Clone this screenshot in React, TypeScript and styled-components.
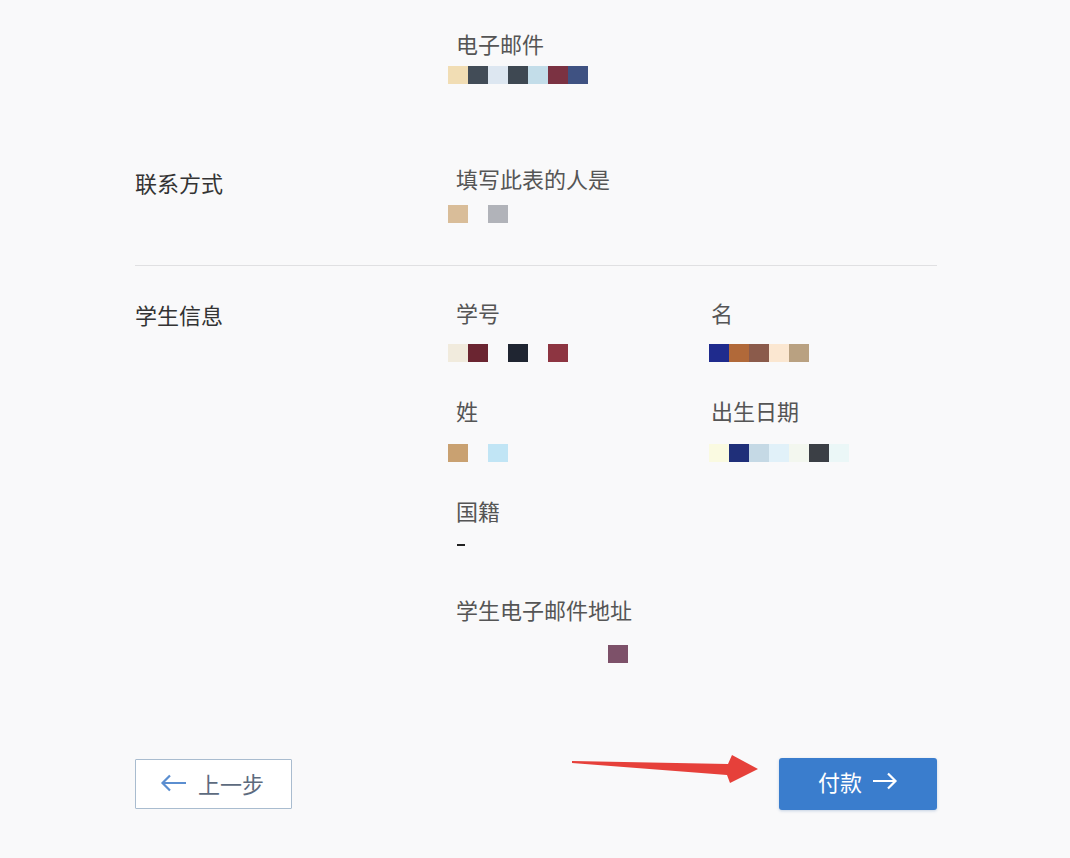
import React from "react";
import styled, { createGlobalStyle } from "styled-components";

const GlobalStyle = createGlobalStyle`
  html, body { margin: 0; padding: 0; background: #f9f9fa; }
  body { font-family: "Noto Sans CJK SC", "Noto Sans", "Liberation Sans", sans-serif; }
  * { box-sizing: border-box; }
`;

const Page = styled.div`
  width: 1070px;
  min-height: 858px;
  padding: 33px 133px 0 135px;
  background: #f9f9fa;
`;

const Section = styled.section<{ $top?: number }>`
  display: grid;
  grid-template-columns: 321px 1fr;
  margin-top: ${(p) => p.$top ?? 0}px;
`;

const SectionLabel = styled.div<{ $top?: number }>`
  font-size: 22px;
  line-height: 20px;
  color: #333;
  padding-top: ${(p) => p.$top ?? 0}px;
`;

const Fields = styled.div`
  display: grid;
  grid-template-columns: 255px 1fr;
  row-gap: 38px;
`;

const Field = styled.div<{ $full?: boolean }>`
  display: flex;
  flex-direction: column;
  grid-column: ${(p) => (p.$full ? "1 / -1" : "auto")};
`;

const FieldLabel = styled.div`
  font-size: 22px;
  line-height: 20px;
  color: #555;
`;

const Value = styled.div<{ $gap: number; $shift: number }>`
  display: flex;
  margin-top: ${(p) => p.$gap}px;
  margin-left: ${(p) => p.$shift}px;
  height: 18px;
`;

const Cell = styled.span<{ $c: string }>`
  width: 20px;
  height: 18px;
  background: ${(p) => p.$c};
`;

const Dash = styled.div`
  margin: 24px 0 15px 1px;
  width: 8px;
  height: 2px;
  background: #222;
`;

const Divider = styled.hr`
  margin: 42px 0 0 0;
  border: 0;
  border-top: 1px solid #e0e0e2;
  width: 802px;
`;

const Footer = styled.div`
  position: relative;
  display: flex;
  justify-content: space-between;
  align-items: center;
  width: 802px;
  margin-top: 95px;
  height: 52px;
`;

const BackButton = styled.button`
  display: flex;
  align-items: center;
  gap: 11px;
  width: 157px;
  height: 50px;
  padding: 0 0 2px 24px;
  background: #fff;
  border: 1.5px solid #a9bccf;
  border-radius: 1px;
  font-family: inherit;
  font-size: 22px;
  color: #5d6b7e;
  cursor: pointer;
`;

const PayButton = styled.button`
  display: flex;
  align-items: center;
  justify-content: center;
  gap: 10px;
  width: 158px;
  height: 52px;
  padding: 0 0 6px 0;
  background: #3a7dcd;
  border: 0;
  border-radius: 3px;
  box-shadow: 0 1px 3px rgba(40, 90, 160, 0.25);
  font-family: inherit;
  font-size: 22px;
  color: #fff;
  cursor: pointer;
`;

const Annotation = styled.svg`
  position: absolute;
  left: 430px;
  top: -8px;
  width: 200px;
  height: 40px;
  pointer-events: none;
`;

const T = "transparent";

type Props = { cells: string[]; gap: number; shift: number };
const Mosaic = ({ cells, gap, shift }: Props) => (
  <Value $gap={gap} $shift={shift}>
    {cells.map((c, i) => (
      <Cell key={i} $c={c} />
    ))}
  </Value>
);

const ArrowLeft = () => (
  <svg width="27" height="20" viewBox="0 0 27 20" fill="none">
    <path d="M26 10H3M10 2.5L2.5 10L10 17.5" stroke="#5b8ed0" strokeWidth="2.2" />
  </svg>
);

const ArrowRight = () => (
  <svg width="26" height="20" viewBox="0 0 26 20" fill="none">
    <path d="M1 10H23M16 2.5L23.5 10L16 17.5" stroke="#fff" strokeWidth="2.2" />
  </svg>
);

export default function App() {
  return (
    <>
      <GlobalStyle />
      <Page>
        <Section>
          <div />
          <Fields>
            <Field $full>
              <FieldLabel>电子邮件</FieldLabel>
              <Mosaic
                gap={13}
                shift={-8}
                cells={["#f1ddb4", "#424c57", "#dde7f1", "#3e4852", "#c3dde9", "#7b3242", "#3f5282"]}
              />
            </Field>
          </Fields>
        </Section>

        <Section $top={84}>
          <SectionLabel $top={4}>联系方式</SectionLabel>
          <Fields>
            <Field $full>
              <FieldLabel>填写此表的人是</FieldLabel>
              <Mosaic gap={17} shift={-8} cells={["#d9bd99", T, "#b1b3b9"]} />
            </Field>
          </Fields>
        </Section>

        <Divider />

        <Section $top={36}>
          <SectionLabel $top={2}>学生信息</SectionLabel>
          <Fields>
            <Field>
              <FieldLabel>学号</FieldLabel>
              <Mosaic
                gap={22}
                shift={-8}
                cells={["#f1ebdd", "#6b2531", T, "#1f2531", T, "#8d3541"]}
              />
            </Field>
            <Field>
              <FieldLabel>名</FieldLabel>
              <Mosaic
                gap={22}
                shift={-2}
                cells={["#1f2b8d", "#b16939", "#8b5b4b", "#fbe7d1", "#b9a181"]}
              />
            </Field>
            <Field>
              <FieldLabel>姓</FieldLabel>
              <Mosaic gap={24} shift={-8} cells={["#c9a171", T, "#c1e5f5"]} />
            </Field>
            <Field>
              <FieldLabel>出生日期</FieldLabel>
              <Mosaic
                gap={24}
                shift={-2}
                cells={["#fafae1", "#1f2f79", "#c5d9e5", "#e1f1f9", "#f3f7ef", "#3b3f45", "#ebf7f7"]}
              />
            </Field>
            <Field $full>
              <FieldLabel>国籍</FieldLabel>
              <Dash />
            </Field>
            <Field $full>
              <FieldLabel>学生电子邮件地址</FieldLabel>
              <Mosaic gap={26} shift={-8} cells={[T, T, T, T, T, T, T, T, "#7d5169"]} />
            </Field>
          </Fields>
        </Section>

        <Footer>
          <BackButton>
            <ArrowLeft />
            上一步
          </BackButton>
          <PayButton>
            付款
            <ArrowRight />
          </PayButton>
          <Annotation viewBox="0 0 200 40">
            <polygon
              points="7,11 163,14 167,5 193,19 165,33 162,25 7,13"
              fill="#e6403a"
            />
          </Annotation>
        </Footer>
      </Page>
    </>
  );
}
